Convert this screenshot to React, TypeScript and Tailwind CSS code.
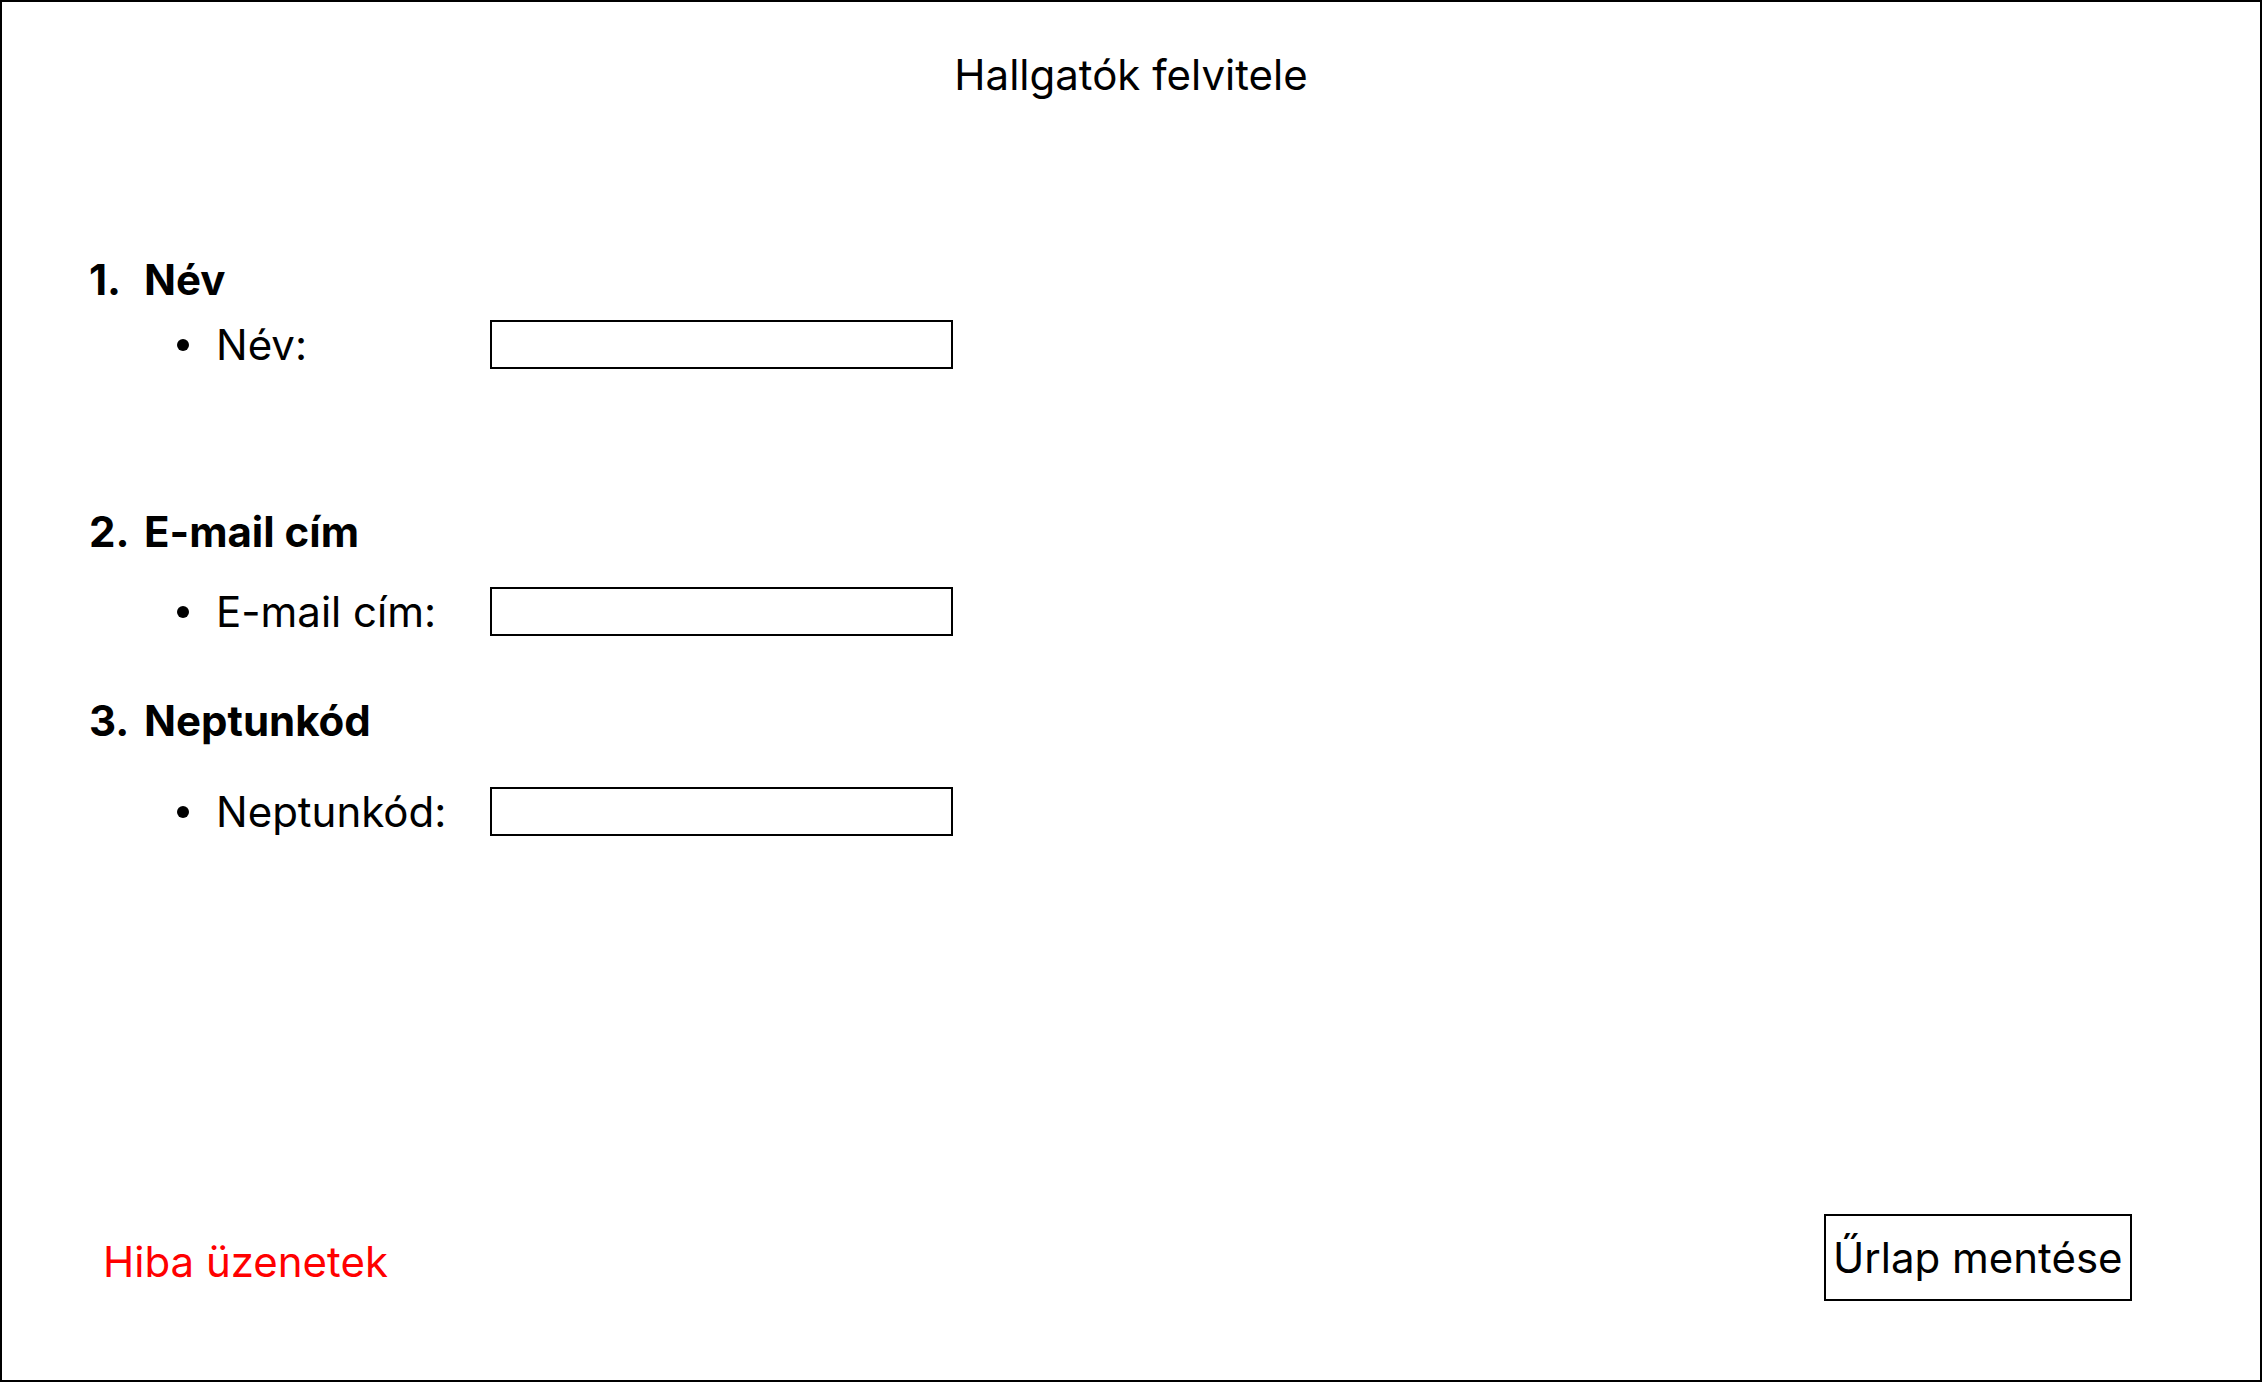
import React from "react";

const font = { fontFamily: "Inter, 'Noto Sans', sans-serif" };

function Heading({ num, text, className }: { num: string; text: string; className: string }) {
  return (
    <div className={"flex items-center h-[44px] pl-[87px] font-bold text-[42px] leading-none text-black " + className}>
      <span className="w-[55px]">{num}</span>
      <span>{text}</span>
    </div>
  );
}

function Item({ label, className }: { label: string; className: string }) {
  return (
    <div className={"flex items-center pl-[175px] " + className}>
      <span className="w-[12px] h-[12px] rounded-full bg-black" />
      <span className="w-[301px] pl-[27px] text-[42px] leading-none text-black">{label}</span>
      <div className="w-[463px] h-[49px] border-2 border-black bg-white" />
    </div>
  );
}

export default function App() {
  return (
    <div style={font} className="w-full h-screen border-2 border-black bg-white flex flex-col box-border">
      <div className="pt-[52px] text-center text-[42px] leading-none text-black">Hallgatók felvitele</div>
      <Heading num="1." text="Név" className="mt-[162px]" />
      <Item label="Név:" className="mt-[18px]" />
      <Heading num="2." text="E-mail cím" className="mt-[141px]" />
      <Item label="E-mail cím:" className="mt-[33px]" />
      <Heading num="3." text="Neptunkód" className="mt-[63px]" />
      <Item label="Neptunkód:" className="mt-[44px]" />
      <div className="flex-1" />
      <div className="flex items-center justify-between pl-[101px] pr-[128px] pb-[79px]">
        <span className="text-[42px] leading-none text-[#ff0000] mt-[9px]">Hiba üzenetek</span>
        <button className="w-[308px] h-[87px] border-2 border-black bg-white text-left pl-[7px] text-[42px] leading-none text-black">
          Űrlap mentése
        </button>
      </div>
    </div>
  );
}
